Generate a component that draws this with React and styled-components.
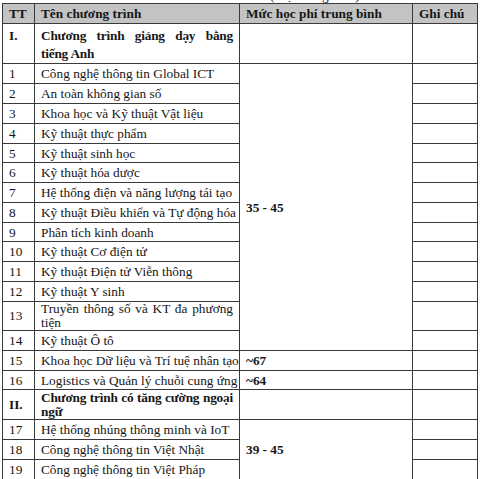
import React from 'react';
import styled, { createGlobalStyle } from 'styled-components';

const GlobalStyle = createGlobalStyle`
  html, body {
    margin: 0;
    padding: 0;
    background: #ffffff;
  }
  body {
    font-family: 'Liberation Serif', 'Times New Roman', serif;
    color: #161616;
  }
`;

const Page = styled.div`
  width: 480px;
  height: 479px;
  overflow: hidden;
  padding-left: 2px;
`;

const Caption = styled.div`
  height: 3px;
  overflow: hidden;
  padding-left: 268px;
  font-size: 13.3px;
  line-height: 14px;
`;

const CaptionText = styled.div`
  margin-top: -11px;
`;

const Table = styled.table`
  border-collapse: collapse;
  table-layout: fixed;
  width: 475px;
  font-size: 13.3px;
`;

const HeadRow = styled.tr`
  height: 20px;
  background: #c3c3c3;
`;

const HeadCell = styled.th`
  border: 1px solid #3a3a3a;
  padding: 0 6px;
  text-align: left;
  font-weight: bold;
  line-height: 16px;
  white-space: nowrap;
`;

const Row = styled.tr`
  height: ${(p) => p.h}px;
`;

const Cell = styled.td`
  border: 1px solid #3a3a3a;
  padding: 0 6px;
  line-height: ${(p) => p.lh || 15}px;
  vertical-align: ${(p) => (p.top ? 'top' : 'middle')};
  padding-top: ${(p) => (p.top ? '3px' : '0')};
  font-weight: ${(p) => (p.bold ? 'bold' : 'normal')};
  letter-spacing: ${(p) => (p.bold && p.justify ? '-0.2px' : 'normal')};
  text-align: ${(p) => (p.justify ? 'justify' : 'left')};
  white-space: ${(p) => (p.single ? 'nowrap' : 'normal')};
  text-align-last: left;
  overflow: hidden;
`;

const rows = [
  { tt: 'I.', name: 'Chương trình giảng dạy bằng tiếng Anh', h: 37, lh: 18, bold: true, top: true, fee: '', feeSpan: 1 },
  { tt: '1', name: 'Công nghệ thông tin Global ICT', h: 20, fee: '35 - 45', feeSpan: 14 },
  { tt: '2', name: 'An toàn không gian số', h: 20 },
  { tt: '3', name: 'Khoa học và Kỹ thuật Vật liệu', h: 20 },
  { tt: '4', name: 'Kỹ thuật thực phẩm', h: 20 },
  { tt: '5', name: 'Kỹ thuật sinh học', h: 19 },
  { tt: '6', name: 'Kỹ thuật hóa dược', h: 20 },
  { tt: '7', name: 'Hệ thống điện và năng lượng tái tạo', h: 20 },
  { tt: '8', name: 'Kỹ thuật Điều khiển và Tự động hóa', h: 20 },
  { tt: '9', name: 'Phân tích kinh doanh', h: 19 },
  { tt: '10', name: 'Kỹ thuật Cơ điện tử', h: 20 },
  { tt: '11', name: 'Kỹ thuật Điện tử Viễn thông', h: 20 },
  { tt: '12', name: 'Kỹ thuật Y sinh', h: 20 },
  { tt: '13', name: 'Truyền thông số và KT đa phương tiện', h: 29, lh: 14, justify: true },
  { tt: '14', name: 'Kỹ thuật Ô tô', h: 20 },
  { tt: '15', name: 'Khoa học Dữ liệu và Trí tuệ nhân tạo', h: 20, fee: '~67', feeSpan: 1 },
  { tt: '16', name: 'Logistics và Quản lý chuỗi cung ứng', h: 19, fee: '~64', feeSpan: 1 },
  { tt: 'II.', name: 'Chương trình có tăng cường ngoại ngữ', h: 30, lh: 14, bold: true, justify: true, fee: '', feeSpan: 1 },
  { tt: '17', name: 'Hệ thống nhúng thông minh và IoT', h: 20, fee: '39 - 45', feeSpan: 3 },
  { tt: '18', name: 'Công nghệ thông tin Việt Nhật', h: 20 },
  { tt: '19', name: 'Công nghệ thông tin Việt Pháp', h: 20 },
];

const App = () => {
  return (
    <Page>
      <GlobalStyle />
      <Caption>
        <CaptionText>(triệu đồng/năm)</CaptionText>
      </Caption>
      <Table>
        <colgroup>
          <col style={{ width: 32 }} />
          <col style={{ width: 205 }} />
          <col style={{ width: 173 }} />
          <col style={{ width: 65 }} />
        </colgroup>
        <thead>
          <HeadRow>
            <HeadCell>TT</HeadCell>
            <HeadCell>Tên chương trình</HeadCell>
            <HeadCell>Mức học phí trung bình</HeadCell>
            <HeadCell>Ghi chú</HeadCell>
          </HeadRow>
        </thead>
        <tbody>
          {rows.map((r) => {
            const single = r.h <= 20;
            return (
              <Row h={r.h} key={r.tt}>
                <Cell bold={r.bold} top={r.top} lh={r.lh} single>
                  {r.tt}
                </Cell>
                <Cell
                  bold={r.bold}
                  top={r.top}
                  lh={r.lh}
                  single={single}
                  justify={r.justify || r.bold}
                >
                  {r.name}
                </Cell>
                {r.feeSpan ? (
                  <Cell bold single rowSpan={r.feeSpan}>
                    {r.fee}
                  </Cell>
                ) : null}
                <Cell />
              </Row>
            );
          })}
        </tbody>
      </Table>
    </Page>
  );
};

export default App;
